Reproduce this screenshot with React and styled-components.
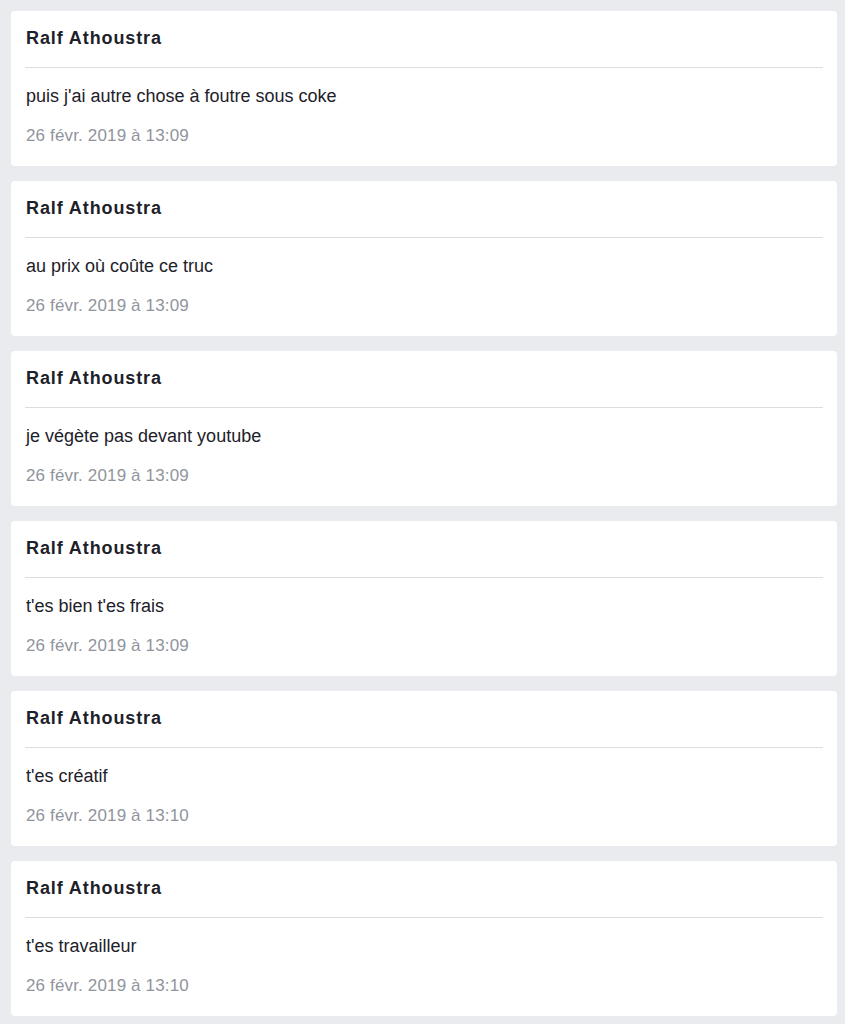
import React from 'react'
import styled, { createGlobalStyle } from 'styled-components'

const messages = [
  { author: 'Ralf Athoustra', text: "puis j'ai autre chose à foutre sous coke", date: '26 févr. 2019 à 13:09' },
  { author: 'Ralf Athoustra', text: 'au prix où coûte ce truc', date: '26 févr. 2019 à 13:09' },
  { author: 'Ralf Athoustra', text: 'je végète pas devant youtube', date: '26 févr. 2019 à 13:09' },
  { author: 'Ralf Athoustra', text: "t'es bien t'es frais", date: '26 févr. 2019 à 13:09' },
  { author: 'Ralf Athoustra', text: "t'es créatif", date: '26 févr. 2019 à 13:10' },
  { author: 'Ralf Athoustra', text: "t'es travailleur", date: '26 févr. 2019 à 13:10' },
]

const GlobalStyle = createGlobalStyle`
  html, body {
    margin: 0;
    padding: 0;
    background: #e9ebee;
    font-family: 'Liberation Sans', Arial, sans-serif;
  }
`

const Feed = () => (
  <Wrapper>
    {messages.map((m, i) => (
      <Card key={i}>
        <Header>
          <Author>{m.author}</Author>
        </Header>
        <Divider />
        <Body>
          <Text>{m.text}</Text>
          <Date>{m.date}</Date>
        </Body>
      </Card>
    ))}
  </Wrapper>
)

const App = () => (
  <>
    <GlobalStyle />
    <Feed />
  </>
)

export default App

const Wrapper = styled.main`
  display: flex;
  flex-direction: column;
  gap: 15px;
  padding: 11px 8px 11px 11px;
  background: #e9ebee;
`

const Card = styled.article`
  background: #fff;
  border-radius: 4px;
  padding: 0 14px;
`

const Header = styled.header`
  padding: 17px 1px 19px;
`

const Author = styled.h3`
  margin: 0;
  font-size: 18px;
  line-height: 20px;
  font-weight: 700;
  letter-spacing: 0.9px;
  color: #1d2129;
`

const Divider = styled.hr`
  margin: 0;
  border: none;
  height: 1px;
  background: #dadde1;
`

const Body = styled.div`
  display: flex;
  flex-direction: column;
  gap: 20px;
  padding: 18px 1px 20px;
`

const Text = styled.p`
  margin: 0;
  font-size: 18px;
  line-height: 20px;
  color: #1d2129;
`

const Date = styled.span`
  font-size: 17px;
  line-height: 20px;
  letter-spacing: 0.15px;
  color: #90949c;
`
